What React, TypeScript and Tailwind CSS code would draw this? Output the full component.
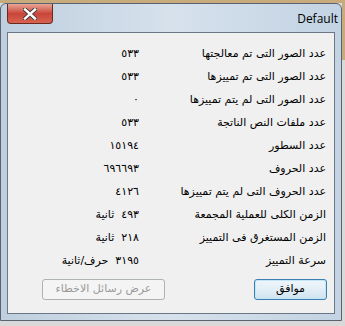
import React from "react";

const rows: { label: string; value: string; unit?: string }[] = [
  { label: "عدد الصور التى تم معالجتها", value: "٥٣٣" },
  { label: "عدد الصور التى تم تمييزها", value: "٥٣٣" },
  { label: "عدد الصور التى لم يتم تمييزها", value: "٠" },
  { label: "عدد ملفات النص الناتجة", value: "٥٣٣" },
  { label: "عدد السطور", value: "١٥١٩٤" },
  { label: "عدد الحروف", value: "٦٩٦٦٩٣" },
  { label: "عدد الحروف التى لم يتم تمييزها", value: "٤١٢٦" },
  { label: "الزمن الكلى للعملية المجمعة", value: "٤٩٣", unit: "ثانية" },
  { label: "الزمن المستغرق فى التمييز", value: "٢١٨", unit: "ثانية" },
  { label: "سرعة التمييز", value: "٣١٩٥", unit: "حرف/ثانية" },
];

export default function App() {
  return (
    <div
      className="w-[345px] h-[326px] overflow-hidden bg-[#d9d9d9] relative"
      style={{ fontFamily: '"DejaVu Sans", Tahoma, sans-serif' }}
    >
      <div className="h-[3px] bg-[#c8ab7c]" />
      <div className="absolute top-0 right-0 w-[3px] h-[60px] bg-[#c8ab7c]" />
      <div className="w-[342px] h-[318px] rounded-t-[6px] border border-[#5a6470] bg-gradient-to-r from-[#bfcfdf] via-[#d6e1ec] to-[#c3d3e3] flex flex-col relative">
        {/* title bar */}
        <div className="h-[28px] relative">
          <div className="absolute left-[6px] top-0 w-[46px] h-[20px] rounded-b-[4px] border border-[#6b2a20] border-t-0 bg-gradient-to-b from-[#e9a596] via-[#c9453a] to-[#d8624f] flex items-center justify-center">
            <svg width="14" height="12" viewBox="0 0 14 12">
              <path
                d="M2 1.5 L12 10.5 M12 1.5 L2 10.5"
                stroke="#3a3a3a"
                strokeWidth="4.2"
                strokeLinecap="square"
              />
              <path
                d="M2 1.5 L12 10.5 M12 1.5 L2 10.5"
                stroke="#ffffff"
                strokeWidth="2.4"
                strokeLinecap="square"
              />
            </svg>
          </div>
          <div
            className="absolute right-[3px] top-[7px] text-[12px] leading-[16px] text-black"
            style={{ fontFamily: '"Open Sans", "Noto Sans", sans-serif' }}
          >
            Default
          </div>
        </div>
        {/* client area */}
        <div className="mx-[6px] h-[282px] border border-[#6a7785] bg-[#f0f0f0] flex flex-col pt-[10px]" dir="rtl">
          {rows.map((r, i) => (
            <div key={i} className="h-[23px] flex items-center pr-[8px] text-[11px] text-black">
              <div className="w-[187px] shrink-0 whitespace-nowrap">{r.label}</div>
              <div className="flex items-center gap-[7px] whitespace-nowrap">
                <span>{r.value}</span>
                {r.unit && <span>{r.unit}</span>}
              </div>
            </div>
          ))}
          <div className="flex items-center pr-[7px] mt-[6px]">
            <button className="w-[73px] h-[21px] rounded-[3px] border border-[#3c7fb1] bg-gradient-to-b from-[#eef6fb] via-[#e3eef6] to-[#cfe3f0] text-[11px] text-black shadow-[inset_0_0_0_1px_#c4e5f6]">
              موافق
            </button>
            <button
              disabled
              className="mr-[89px] w-[123px] h-[21px] rounded-[3px] border border-[#adb2b5] bg-[#f4f4f4] text-[11px] text-[#9a9a9a]"
            >
              عرض رسائل الاخطاء
            </button>
          </div>
        </div>
      </div>
    </div>
  );
}
